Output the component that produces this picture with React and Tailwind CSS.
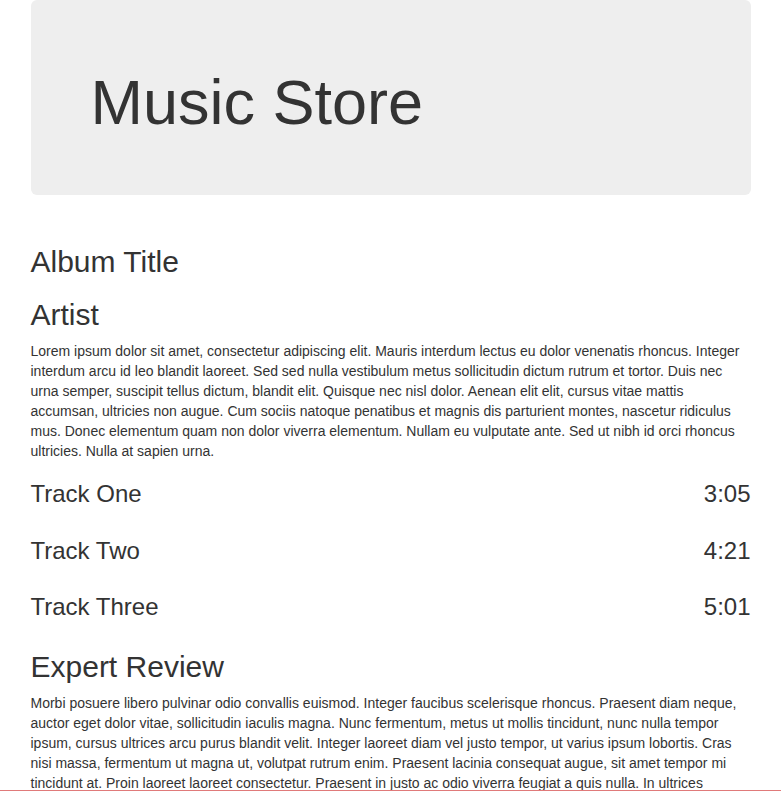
export default function App() {
  const tracks = [
    { title: 'Track One', time: '3:05' },
    { title: 'Track Two', time: '4:21' },
    { title: 'Track Three', time: '5:01' }
  ];

  return (
    <div className="bg-white text-[#333] font-['Liberation_Sans',Arial,sans-serif] min-h-screen">
      <div className="w-[750px] mx-auto px-[15px]">
        {/* Jumbotron */}
        <div className="bg-[#eee] rounded-[6px] px-[60px] pt-[48px] pb-[48px] mb-[30px]">
          <h1 className="text-[63px] leading-[1.1] font-normal mt-[20px] mb-[10px]">Music Store</h1>
        </div>

        <div className="flow-root">
          <h2 className="text-[30px] leading-[1.1] font-normal mt-[20px] mb-[10px]">Album Title</h2>
          <h2 className="text-[30px] leading-[1.1] font-normal mt-[20px] mb-[10px]">Artist</h2>
          <p className="text-[14px] leading-[20px]">
            Lorem ipsum dolor sit amet, consectetur adipiscing elit. Mauris interdum lectus eu dolor venenatis rhoncus. Integer interdum arcu id leo blandit laoreet. Sed sed nulla vestibulum metus sollicitudin dictum rutrum et tortor. Duis nec urna semper, suscipit tellus dictum, blandit elit. Quisque nec nisl dolor. Aenean elit elit, cursus vitae mattis accumsan, ultricies non augue. Cum sociis natoque penatibus et magnis dis parturient montes, nascetur ridiculus mus. Donec elementum quam non dolor viverra elementum. Nullam eu vulputate ante. Sed ut nibh id orci rhoncus ultricies. Nulla at sapien urna.
          </p>

          {/* Tracks */}
          {tracks.map((track) => (
            <div key={track.title} className="flex justify-between">
              <h3 className="text-[24px] leading-[1.1] font-normal mt-[20px] mb-[10px]">{track.title}</h3>
              <h3 className="text-[24px] leading-[1.1] font-normal mt-[20px] mb-[10px]">{track.time}</h3>
            </div>
          ))}

          <h2 className="text-[30px] leading-[1.1] font-normal mt-[20px] mb-[10px]">Expert Review</h2>
          <p className="text-[14px] leading-[20px] mb-[10px]">
            Morbi posuere libero pulvinar odio convallis euismod. Integer faucibus scelerisque rhoncus. Praesent diam neque, auctor eget dolor vitae, sollicitudin iaculis magna. Nunc fermentum, metus ut mollis tincidunt, nunc nulla tempor ipsum, cursus ultrices arcu purus blandit velit. Integer laoreet diam vel justo tempor, ut varius ipsum lobortis. Cras nisi massa, fermentum ut magna ut, volutpat rutrum enim. Praesent lacinia consequat augue, sit amet tempor mi tincidunt at. Proin laoreet laoreet consectetur. Praesent in justo ac odio viverra feugiat a quis nulla. In ultrices tincidunt neque, non fermentum lectus pretium sed. Sed vel sapien in odio semper gravida.
          </p>
        </div>
      </div>

      {/* viewport edge line */}
      <div className="fixed left-0 right-0 bottom-0 h-px bg-[#e07a7a]" />
    </div>
  );
}
